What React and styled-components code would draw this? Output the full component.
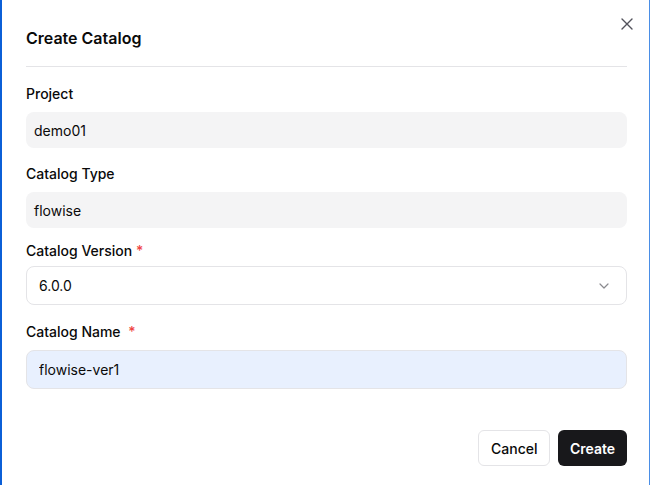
import styled, { createGlobalStyle } from 'styled-components';

const GlobalStyle = createGlobalStyle`
  * {
    box-sizing: border-box;
  }
  body {
    margin: 0;
    background: #ffffff;
    font-family: Inter, "Noto Sans", sans-serif;
    color: #0a0a0a;
  }
`;

function CloseIcon() {
  return (
    <svg width="12" height="12" viewBox="0 0 12 12" fill="none">
      <path d="M1 1L11 11M11 1L1 11" stroke="#52525b" strokeWidth="1.4" strokeLinecap="round" />
    </svg>
  );
}

function ChevronIcon() {
  return (
    <svg width="10" height="6" viewBox="0 0 10 6" fill="none">
      <path d="M1 1L5 5L9 1" stroke="#8a8a8f" strokeWidth="1.2" strokeLinecap="round" strokeLinejoin="round" />
    </svg>
  );
}

function App() {
  return (
    <>
      <GlobalStyle />
      <Frame>
        <Dialog>
          <CloseButton aria-label="Close">
            <CloseIcon />
          </CloseButton>
          <Header>
            <Title>Create Catalog</Title>
          </Header>

          <Field $top={17}>
            <Label>Project</Label>
            <ReadOnly>demo01</ReadOnly>
          </Field>

          <Field $top={16}>
            <Label>Catalog Type</Label>
            <ReadOnly>flowise</ReadOnly>
          </Field>

          <Field $top={13} $gap={5}>
            <Label>
              Catalog Version <Required>*</Required>
            </Label>
            <Select>
              <span>6.0.0</span>
              <ChevronIcon />
            </Select>
          </Field>

          <Field $top={17}>
            <Label>
              Catalog Name <Required $space>*</Required>
            </Label>
            <InputBox>
              <TextInput defaultValue="flowise-ver1" />
            </InputBox>
          </Field>

          <Footer>
            <CancelButton>Cancel</CancelButton>
            <CreateButton>Create</CreateButton>
          </Footer>
        </Dialog>
      </Frame>
    </>
  );
}

export default App;

const Frame = styled.div`
  width: 651px;
  height: 485px;
  padding-right: 1px;
  background: #ffffff;
`;

const Dialog = styled.div`
  position: relative;
  height: 100%;
  border-left: 2px solid #0b5fd7;
  border-right: 1px solid #4a8ee6;
  padding: 26px 22px 0 24px;
`;

const CloseButton = styled.button`
  position: absolute;
  top: 16px;
  right: 14px;
  width: 16px;
  height: 16px;
  padding: 0;
  border: none;
  background: transparent;
  display: flex;
  align-items: center;
  justify-content: center;
  cursor: pointer;
`;

const Header = styled.div`
  padding-bottom: 16px;
  border-bottom: 1px solid #e4e4e7;
`;

const Title = styled.h2`
  margin: 0;
  font-size: 16px;
  line-height: 24px;
  font-weight: 600;
  color: #0a0a0a;
`;

const Field = styled.div`
  display: flex;
  flex-direction: column;
  gap: ${(p) => p.$gap ?? 8}px;
  margin-top: ${(p) => p.$top}px;
`;

const Label = styled.label`
  font-size: 14px;
  line-height: 20px;
  font-weight: 500;
  color: #0a0a0a;
`;

const Required = styled.span`
  color: #ef4444;
  margin-left: ${(p) => (p.$space ? 4 : 0)}px;
`;

const ReadOnly = styled.div`
  height: 36px;
  display: flex;
  align-items: center;
  padding: 0 8px;
  border-radius: 8px;
  background: #f4f4f5;
  font-size: 14px;
  color: #0a0a0a;
`;

const Select = styled.div`
  height: 39px;
  display: flex;
  align-items: center;
  justify-content: space-between;
  padding: 0 17px 0 12px;
  border: 1px solid #e4e4e7;
  border-radius: 8px;
  background: #ffffff;
  font-size: 14px;
  color: #0a0a0a;
`;

const InputBox = styled.div`
  height: 39px;
  display: flex;
  align-items: center;
  padding: 0 12px;
  border: 1px solid #e4e4e7;
  border-radius: 8px;
  background: #e8f0fe;
`;

const TextInput = styled.input`
  flex: 1;
  min-width: 0;
  padding: 0;
  border: none;
  background: transparent;
  font-family: Inter, "Noto Sans", sans-serif;
  font-size: 14px;
  color: #0a0a0a;
  outline: none;
`;

const Footer = styled.div`
  display: flex;
  justify-content: flex-end;
  gap: 8px;
  margin-top: 41px;
`;

const BaseButton = styled.button`
  height: 36px;
  padding: 0 12px;
  border-radius: 6px;
  font-family: Inter, "Noto Sans", sans-serif;
  font-size: 14px;
  cursor: pointer;
`;

const CancelButton = styled(BaseButton)`
  width: 72px;
  border: 1px solid #e4e4e7;
  background: #ffffff;
  color: #0a0a0a;
  font-weight: 500;
`;

const CreateButton = styled(BaseButton)`
  width: 69px;
  border: none;
  background: #18181b;
  color: #ffffff;
  font-weight: 600;
`;
